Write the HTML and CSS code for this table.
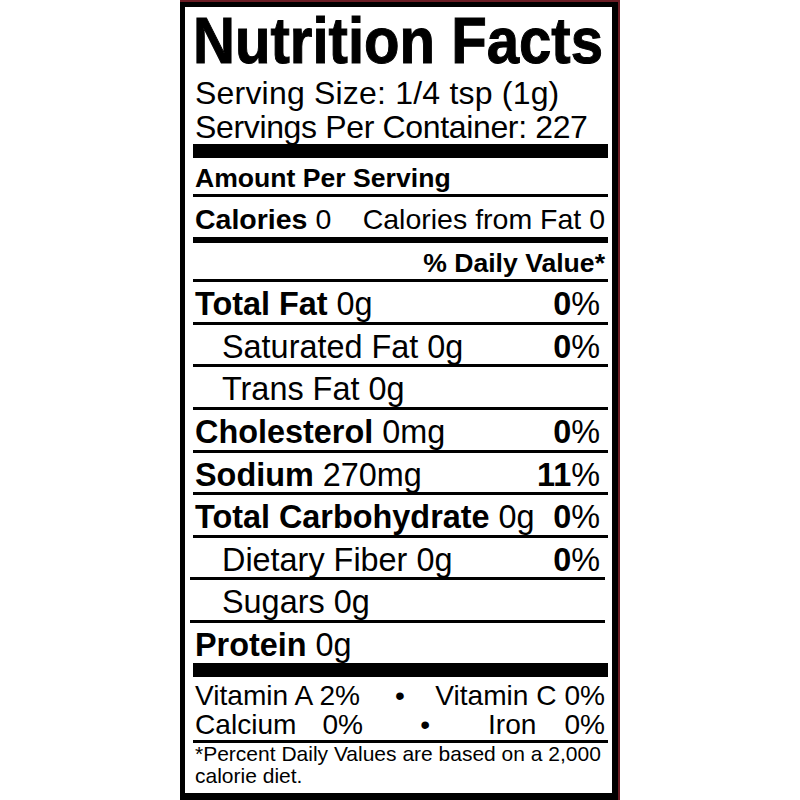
FILE: index.html
```html
<!DOCTYPE html>
<html lang="en">
<head>
<meta charset="utf-8">
<title>Nutrition Facts</title>
<link rel="stylesheet" href="styles.css">
</head>
<body>
<div class="frame">
  <div class="label">
    <h1 class="title"><span class="title-text">Nutrition Facts</span></h1>
    <div class="serving serving--first">Serving Size: 1/4 tsp (1g)</div>
    <div class="serving serving--tight">Servings Per Container: 227</div>
    <div class="bar"></div>

    <div class="row row--amount"><span>Amount Per Serving</span></div>
    <div class="row row--calories"><span><b>Calories</b> 0</span><span>Calories from Fat 0</span></div>
    <div class="row row--dv"><span>% Daily Value*</span></div>

    <div class="row row--nutrient"><span><b>Total Fat</b> 0g</span><span class="pct"><b>0</b>%</span></div>
    <div class="row row--nutrient row--sub"><span>Saturated Fat 0g</span><span class="pct"><b>0</b>%</span></div>
    <div class="row row--nutrient row--sub"><span>Trans Fat 0g</span></div>
    <div class="row row--nutrient"><span><b>Cholesterol</b> 0mg</span><span class="pct"><b>0</b>%</span></div>
    <div class="row row--nutrient"><span><b>Sodium</b> 270mg</span><span class="pct"><b>11</b>%</span></div>
    <div class="row row--nutrient"><span><b>Total Carbohydrate</b> 0g</span><span class="pct"><b>0</b>%</span></div>
    <div class="row row--nutrient row--sub row--shift"><span>Dietary Fiber 0g</span><span class="pct"><b>0</b>%</span></div>
    <div class="row row--nutrient row--sub row--shift"><span>Sugars 0g</span></div>
    <div class="row row--nutrient row--last"><span><b>Protein</b> 0g</span></div>
    <div class="bar"></div>

    <div class="vitamins">
      <span class="vit-left">Vitamin A 2%</span>
      <span class="vit-dot">•</span>
      <span class="vit-right">Vitamin C 0%</span>
      <span class="vit-left vit-split"><span>Calcium</span><span>0%</span></span>
      <span class="vit-dot vit-dot--shift">•</span>
      <span class="vit-right vit-split vit-split--end"><span>Iron</span><span>0%</span></span>
    </div>

    <p class="footnote">*Percent Daily Values are based on a 2,000 calorie diet.</p>
  </div>
</div>
</body>
</html>
```

FILE: styles.css
```css
* {
  box-sizing: border-box;
}

html,
body {
  margin: 0;
  padding: 0;
  background: #ffffff;
}

body {
  font-family: "Liberation Sans", Arial, Helvetica, sans-serif;
  color: #000000;
}

.frame {
  width: 440px;
  height: 800px;
  margin: 0 auto;
  border-top: 2px solid #6b1c24;
  border-right: 2px solid #6b1c24;
}

.label {
  height: 798px;
  border-style: solid;
  border-color: #000000;
  border-width: 5px 6px 7px 5px;
  padding: 2px 4px 0 8px;
  overflow: hidden;
}

.title {
  margin: 0;
  height: 64px;
  font-size: 64px;
  line-height: 64px;
  font-weight: 700;
  white-space: nowrap;
}

.title-text {
  display: inline-block;
  transform: scaleX(0.908);
  transform-origin: 0 50%;
  -webkit-text-stroke: 1px #000000;
}

.serving {
  font-size: 32px;
  line-height: 34px;
  height: 34px;
  padding-left: 2px;
  white-space: nowrap;
}

.serving--first {
  margin-top: 3px;
  letter-spacing: 0.2px;
}

.serving--tight {
  letter-spacing: -0.35px;
}

.bar {
  height: 14px;
  background: #000000;
}

.row {
  display: flex;
  justify-content: space-between;
  align-items: baseline;
  border-bottom: 3px solid #000000;
  padding: 0 3px 0 2px;
  white-space: nowrap;
}

.row b {
  font-weight: 700;
}

.row--amount {
  height: 39px;
  padding-top: 6px;
  font-size: 26.6px;
  line-height: 28px;
  font-weight: 700;
}

.row--calories {
  height: 46px;
  padding-top: 4px;
  font-size: 28.5px;
  line-height: 36px;
  border-bottom-width: 6px;
}

.row--dv {
  height: 39px;
  padding-top: 5px;
  justify-content: flex-end;
  font-size: 26.6px;
  line-height: 30px;
  font-weight: 700;
}

.row--nutrient {
  height: 42.625px;
  padding-top: 4px;
  font-size: 32.4px;
  line-height: 36px;
}

.row--sub {
  padding-left: 29px;
}

.row--shift {
  margin-left: -3px;
  margin-right: 3px;
  padding-left: 32px;
  padding-right: 0;
}

.row--last {
  height: 39.625px;
  border-bottom: none;
}

.pct {
  padding-right: 5px;
}

.vitamins {
  display: grid;
  grid-template-columns: 168px 74px 168px;
  height: 66.4px;
  padding: 5px 3px 0 2px;
  font-size: 28.1px;
  line-height: 28px;
  border-bottom: 3px solid #000000;
  white-space: nowrap;
}

.vit-left {
  text-align: left;
}

.vit-dot {
  text-align: center;
}

.vit-dot--shift {
  text-align: right;
  padding-right: 7px;
}

.vit-right {
  display: flex;
  justify-content: flex-end;
}

.vit-split {
  display: flex;
  justify-content: space-between;
}

.vit-split--end {
  justify-content: flex-end;
  gap: 28px;
}

.footnote {
  margin: 0;
  padding: 0 3px 0 2px;
  font-size: 21px;
  line-height: 22px;
}
```
